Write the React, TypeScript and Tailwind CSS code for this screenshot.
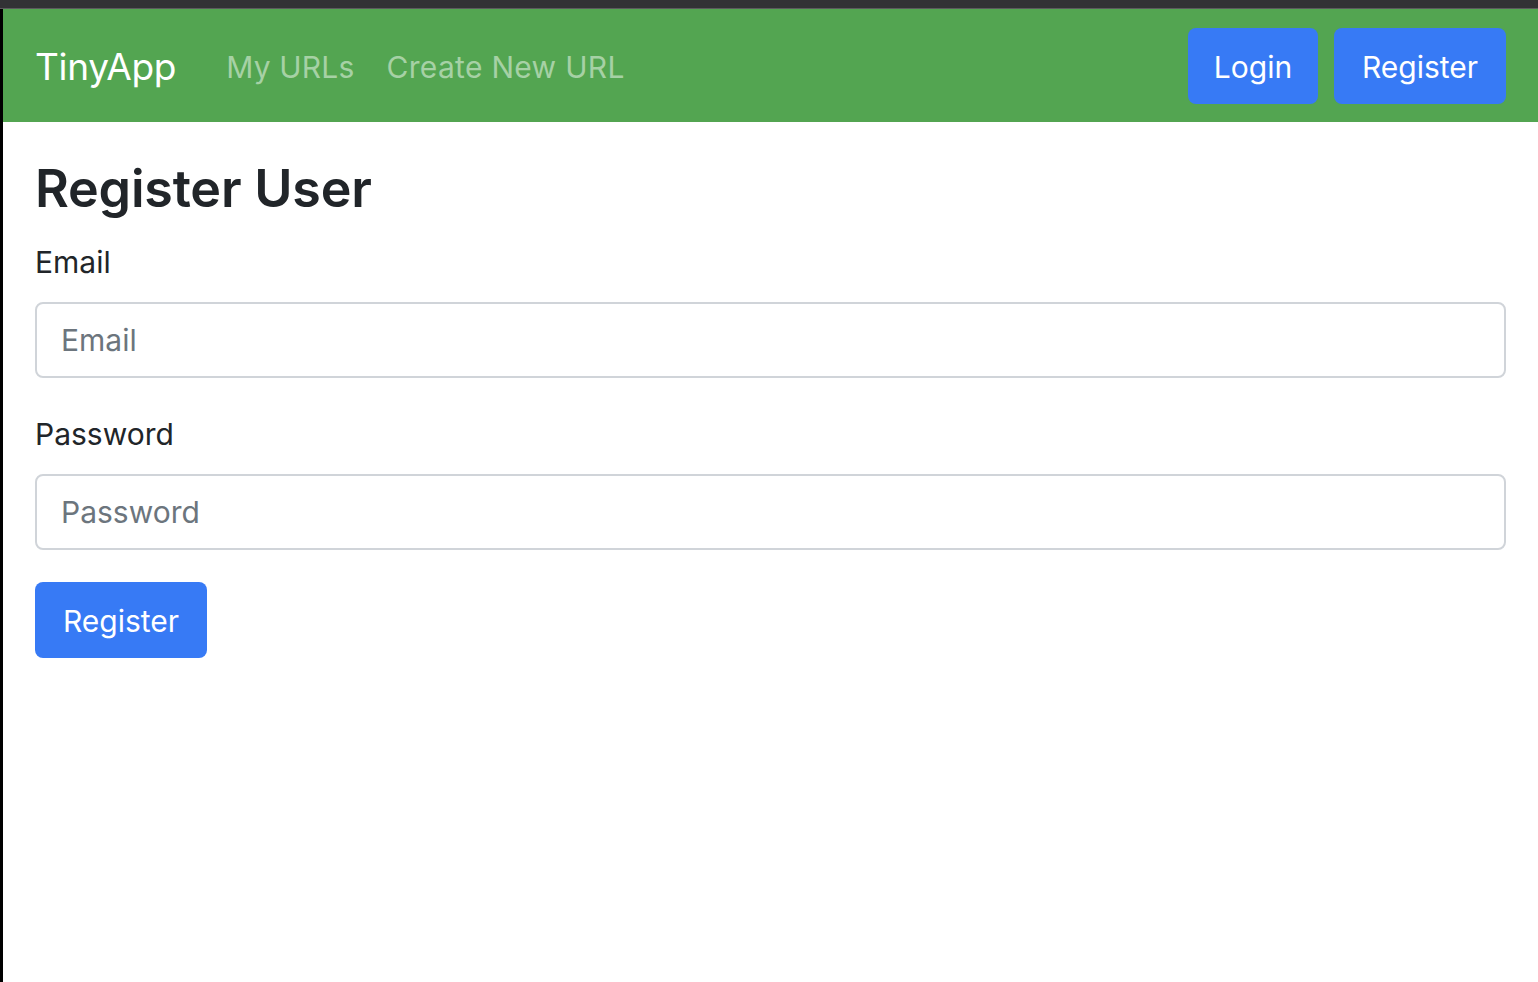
export default function App() {
  return (
    <div className="min-h-screen bg-white font-['Inter','Liberation_Sans',sans-serif] text-[#212529]">
      <div className="h-[9px] bg-[#323235] border-b border-[#5b5b5d]"></div>
      <div className="border-l-[3px] border-black min-h-[973px]">
        <nav className="flex items-center justify-between bg-[#53a551] h-[113px] pl-[32px] pr-[32px]">
          <div className="flex items-center pt-[3px]">
            <a className="text-[37px] text-white mr-[34px] tracking-[-0.3px]">TinyApp</a>
            <a className="text-[30px] text-[#a6d1a5] px-4 tracking-[0.2px]">My URLs</a>
            <a className="text-[30px] text-[#a6d1a5] px-4 tracking-[0.3px]">Create New URL</a>
          </div>
          <div className="flex items-center gap-4">
            <button className="bg-[#377af5] text-white text-[30px] h-[76px] w-[130px] rounded-lg pt-[3px]">Login</button>
            <button className="bg-[#377af5] text-white text-[30px] h-[76px] w-[172px] rounded-lg pt-[3px]">Register</button>
          </div>
        </nav>
        <div className="px-[32px] pt-[33px]">
          <h2 className="text-[52px] font-semibold leading-[67px] mb-4 tracking-[-0.2px]">Register User</h2>
          <form>
            <div className="mb-8">
              <label className="block text-[30px] leading-[48px] mb-4">Email</label>
              <input
                type="email"
                placeholder="Email"
                className="block w-full h-[76px] border-2 border-[#d0d4d9] rounded-lg px-[24px] text-[30px] placeholder:text-[#6c757d] outline-none"
              />
            </div>
            <div className="mb-8">
              <label className="block text-[30px] leading-[48px] mb-4">Password</label>
              <input
                type="password"
                placeholder="Password"
                className="block w-full h-[76px] border-2 border-[#d0d4d9] rounded-lg px-[24px] text-[30px] placeholder:text-[#6c757d] outline-none"
              />
            </div>
            <button type="submit" className="bg-[#377af5] text-white text-[30px] h-[76px] w-[172px] rounded-lg pt-[2px]">
              Register
            </button>
          </form>
        </div>
      </div>
    </div>
  );
}
